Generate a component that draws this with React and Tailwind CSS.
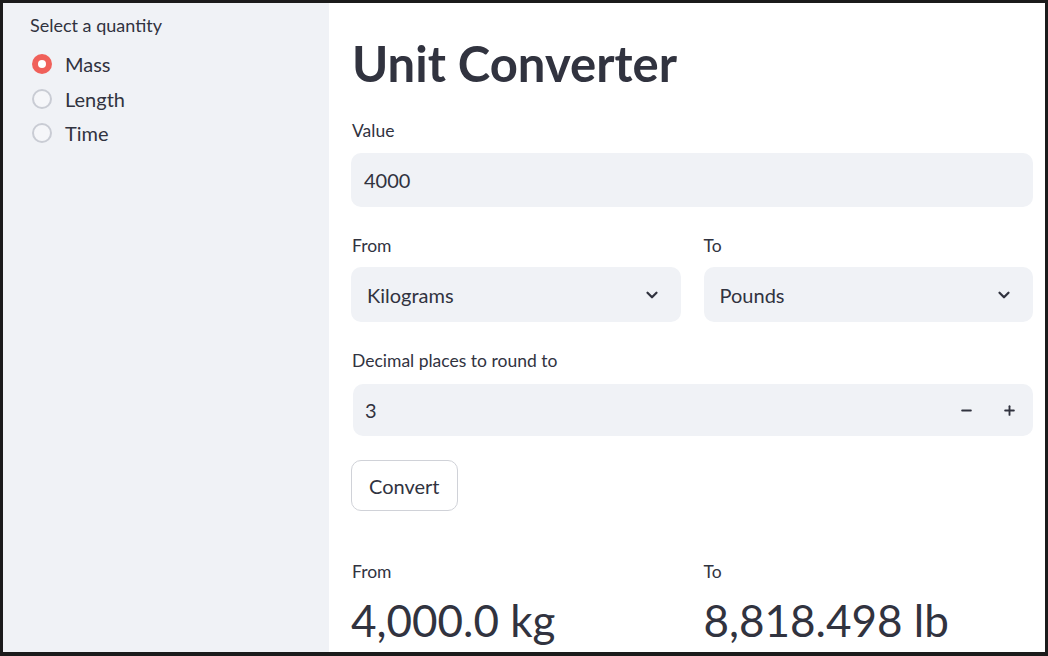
import { ChevronDown, Minus, Plus } from "lucide-react";

const font = { fontFamily: "Lato, 'Noto Sans', sans-serif" };

function Radio({ label, checked }) {
  return (
    <label className="flex items-center gap-[13px] h-[34.5px]">
      {checked ? (
        <span className="w-[20px] h-[20px] rounded-full bg-[#f0605a] flex items-center justify-center">
          <span className="w-[8px] h-[8px] rounded-full bg-white" />
        </span>
      ) : (
        <span className="w-[20px] h-[20px] rounded-full border-2 border-[#c9ccd4] bg-[#f5f6f9]" />
      )}
      <span className="text-[20px] text-[#31333f]">{label}</span>
    </label>
  );
}

function Select({ value }) {
  return (
    <div className="h-[55px] rounded-[10px] bg-[#f0f2f6] flex items-center justify-between pl-[16px] pr-[20px]">
      <span className="text-[20px] text-[#31333f]">{value}</span>
      <ChevronDown size={18} strokeWidth={3} className="text-[#31333f]" />
    </div>
  );
}

export default function App() {
  return (
    <div
      className="w-[1048px] h-[656px] border-[3px] border-b-4 border-[#1b1b1b] flex overflow-hidden bg-white text-[#31333f]"
      style={font}
    >
      {/* sidebar */}
      <aside className="w-[326px] bg-[#f0f2f6] pl-[27px] pt-[10px]">
        <div className="text-[18px] leading-[24px]">Select a quantity</div>
        <div className="mt-[10px] pl-[2px]">
          <Radio label="Mass" checked />
          <Radio label="Length" />
          <Radio label="Time" />
        </div>
      </aside>

      {/* main */}
      <main className="flex-1 pl-[22px] pr-[12px] pt-[30px]">
        <h1 className="text-[49px] font-bold leading-[60px] pl-[1px]">Unit Converter</h1>

        <div className="mt-[26px] text-[17.5px] leading-[24px] pl-[1px]">Value</div>
        <div className="mt-[10px] h-[54px] rounded-[10px] bg-[#f0f2f6] flex items-center px-[13px] text-[20px]">
          4000
        </div>

        <div className="grid grid-cols-2 gap-x-[23px] mt-[27px]">
          <div>
            <div className="text-[17.5px] leading-[24px] pl-[1px]">From</div>
            <div className="mt-[9px]">
              <Select value="Kilograms" />
            </div>
          </div>
          <div>
            <div className="text-[17.5px] leading-[24px]">To</div>
            <div className="mt-[9px]">
              <Select value="Pounds" />
            </div>
          </div>
        </div>

        <div className="mt-[27px] text-[17.5px] leading-[24px] pl-[1px]">Decimal places to round to</div>
        <div className="mt-[11px] ml-[2px] h-[52px] rounded-[10px] bg-[#f0f2f6] flex items-center pl-[12px] pr-[16px] text-[20px]">
          <span className="flex-1">3</span>
          <div className="flex items-center gap-[28px]">
            <Minus size={15} strokeWidth={3} />
            <Plus size={15} strokeWidth={3} />
          </div>
        </div>

        <button className="mt-[24px] h-[51px] px-[17px] rounded-[10px] border border-[#d0d2d8] bg-white text-[20px] text-[#31333f]">
          Convert
        </button>

        <div className="grid grid-cols-2 gap-x-[23px] mt-[49px]">
          <div>
            <div className="text-[17.5px] leading-[24px] pl-[1px]">From</div>
            <div className="mt-[8px] text-[44px] leading-[56px]">4,000.0 kg</div>
          </div>
          <div>
            <div className="text-[17.5px] leading-[24px]">To</div>
            <div className="mt-[8px] text-[44px] leading-[56px]">8,818.498 lb</div>
          </div>
        </div>
      </main>
    </div>
  );
}
